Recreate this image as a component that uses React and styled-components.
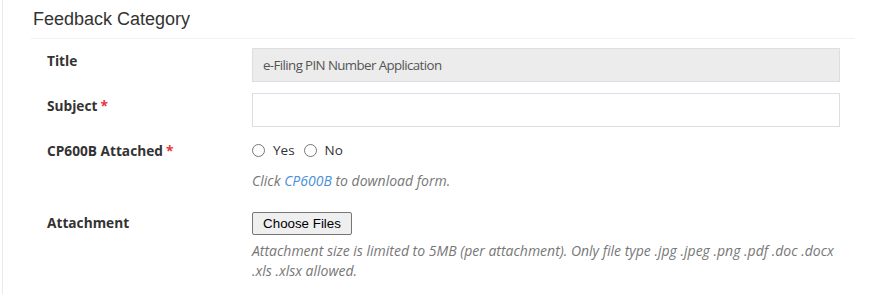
import React from 'react';
import styled, { createGlobalStyle } from 'styled-components';

const GlobalStyle = createGlobalStyle`
  html, body {
    margin: 0;
    padding: 0;
    background: #fff;
  }
  body {
    font-family: "Open Sans", "Liberation Sans", sans-serif;
    font-size: 14px;
    color: #333;
  }
`;

const Page = styled.div`
  margin-left: 2px;
  min-height: 294px;
  border-left: 1px solid #e9e9e9;
  box-sizing: border-box;
`;

const Panel = styled.section`
  padding: 0 15px 0 28px;
`;

const Heading = styled.h3`
  margin: 0;
  padding: 9px 0 9px 2px;
  font-family: "Liberation Sans", Arial, sans-serif;
  font-size: 18px;
  font-weight: normal;
  line-height: 20px;
  color: #333;
  border-bottom: 1px solid #f2f2f2;
`;

const Form = styled.form`
  padding: 9px 15px 0 16px;
`;

const Row = styled.div`
  display: grid;
  grid-template-columns: 205px 1fr;
  margin-bottom: ${p => p.$gap || 11}px;
`;

const Label = styled.label`
  padding-top: 6px;
  font-weight: 700;
  font-size: 13.7px;
  line-height: 13px;
  color: #333;
`;

const Required = styled.span`
  color: #e8343a;
  margin-left: 3px;
`;

const TextInput = styled.input`
  display: block;
  box-sizing: border-box;
  width: 100%;
  height: 34px;
  padding: 6px 12px 6px 10px;
  font-family: "Open Sans", sans-serif;
  font-size: 13.3px;
  letter-spacing: -0.6px;
  color: #555;
  background: ${p => (p.disabled ? '#ececec' : '#fff')};
  border: 1px solid #dcdde5;
  border-radius: 0;
  outline: none;
`;

const Radios = styled.div`
  display: flex;
  align-items: center;
  height: 24px;
  gap: 9px;
`;

const RadioLabel = styled.label`
  display: flex;
  align-items: center;
  gap: 8px;
  font-size: 13.5px;
  color: #333;
`;

const RadioCircle = styled.span`
  display: inline-block;
  width: 11px;
  height: 11px;
  border: 1px solid #777;
  border-radius: 50%;
`;

const Help = styled.p`
  margin: ${p => p.$top || 9}px 0 0;
  font-style: italic;
  font-size: 14px;
  line-height: 20px;
  color: #777;
`;

const Link = styled.a`
  color: #4a90d9;
  text-decoration: none;
`;

const FileButton = styled.button`
  margin-top: 2px;
  height: 23px;
  width: 100px;
  padding: 0;
  font-family: "Liberation Sans", Arial, sans-serif;
  font-size: 13.33px;
  color: #000;
  background: #efefef;
  border: 1px solid #767676;
  border-radius: 2px;
`;

export default function App() {
  return (
    <>
      <GlobalStyle />
      <Page>
        <Panel>
          <Heading>Feedback Category</Heading>
          <Form onSubmit={e => e.preventDefault()}>
            <Row>
              <Label>Title</Label>
              <TextInput disabled value="e-Filing PIN Number Application" readOnly />
            </Row>
            <Row>
              <Label>Subject<Required>*</Required></Label>
              <TextInput />
            </Row>
            <Row $gap={19}>
              <Label>CP600B Attached<Required>*</Required></Label>
              <div>
                <Radios>
                  <RadioLabel><RadioCircle />Yes</RadioLabel>
                  <RadioLabel><RadioCircle />No</RadioLabel>
                </Radios>
                <Help>Click <Link href="#">CP600B</Link> to download form.</Help>
              </div>
            </Row>
            <Row>
              <Label>Attachment</Label>
              <div>
                <FileButton type="button">Choose Files</FileButton>
                <Help $top={6}>
                  Attachment size is limited to 5MB (per attachment). Only file type .jpg .jpeg .png .pdf .doc .docx .xls .xlsx allowed.
                </Help>
              </div>
            </Row>
          </Form>
        </Panel>
      </Page>
    </>
  );
}
